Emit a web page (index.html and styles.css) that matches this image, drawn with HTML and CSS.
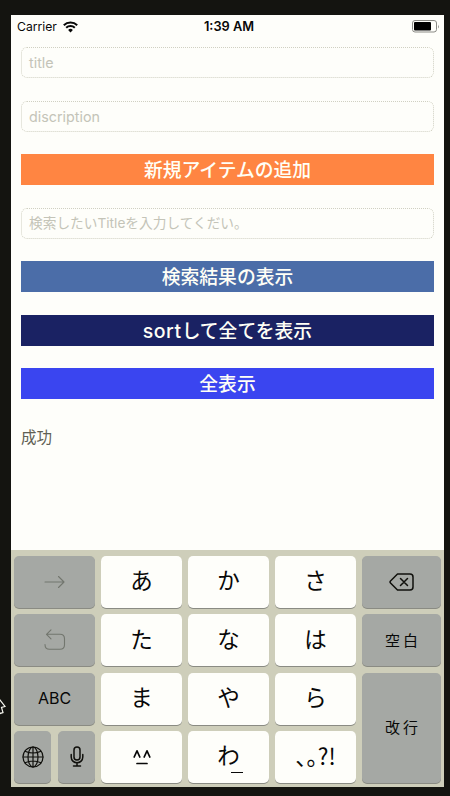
FILE: index.html
```html
<!DOCTYPE html>
<html lang="ja">
<head>
<meta charset="utf-8">
<title>アイテム</title>
<link rel="stylesheet" href="styles.css">
</head>
<body>
<main class="phone">
  <header class="status">
    <div class="carrier"><span>Carrier</span>
      <svg class="wifi" viewBox="0 0 15 12" width="15" height="12"><path d="M.8 4.200a9.600 9.600 0 0 1 13.400 0M3.200 6.800a6.100 6.100 0 0 1 8.600 0" fill="none" stroke="#080808" stroke-width="2"/><path d="M5.100 8.900a3.400 3.400 0 0 1 4.800 0L7.500 11.400z" fill="#080808"/></svg>
    </div>
    <div class="time">1:39 AM</div>
    <svg class="battery" viewBox="0 0 28 13" width="28" height="13"><rect x=".5" y=".5" width="24" height="11.500" rx="2.500" fill="none" stroke="#8b8b86"/><rect x="2" y="2" width="17" height="8.500" rx="1" fill="#000"/><path d="M26 4.500v4q1.500-2 0-4" fill="#8b8b86"/></svg>
  </header>
  <section class="form">
    <div class="field">title</div>
    <div class="field">discription</div>
    <div class="button orange">新規アイテムの追加</div>
    <div class="field search">検索したいTitleを入力してくだい。</div>
    <div class="button blue">検索結果の表示</div>
    <div class="button navy"><span><span class="latin">sort</span>して全てを表示</span></div>
    <div class="button bright">全表示</div>
    <p class="result">成功</p>
  </section>
  <section class="keyboard">
    <div class="key gray"><svg class="dim" viewBox="0 0 22 14" width="22" height="14"><path d="M1 7h19M14.500 1.500 20 7l-5.500 5.500"/></svg></div>
    <div class="key">あ</div><div class="key">か</div><div class="key">さ</div>
    <div class="key gray"><svg class="ink" viewBox="0 0 25 18" width="25" height="18"><path d="M8.500 1H21q3 0 3 3v10q0 3-3 3H8.500L1.500 10q-1-1 0-2zM11.500 5.500l7 7M18.500 5.500l-7 7"/></svg></div>
    <div class="key gray"><svg class="dim" viewBox="0 0 22 22" width="22" height="22"><path d="M7 .8 2.500 5.300 7 9.800M2.500 5.300H16q4.500 0 4.500 4.500v6q0 4.500-4.500 4.500H5.500Q1 20.300 1 15.500"/></svg></div>
    <div class="key">た</div><div class="key">な</div><div class="key">は</div>
    <div class="key gray word">空白</div>
    <div class="key gray abc">ABC</div>
    <div class="key">ま</div><div class="key">や</div><div class="key">ら</div>
    <div class="key gray word enter">改行</div>
    <div class="pair">
      <div class="key gray"><svg class="ink globe" viewBox="0 0 22 22" width="22" height="22"><circle cx="11" cy="11" r="10"/><ellipse cx="11" cy="11" rx="5" ry="10"/><path d="M11 1v20M1 11h20M3 5.200q8 3.600 16 0M3 16.800q8-3.600 16 0"/></svg></div>
      <div class="key gray"><svg class="ink" viewBox="0 0 14 21" width="14" height="21"><rect x="4" y="1" width="6" height="13" rx="3"/><path d="M1.200 8.500V11a5.800 5.800 0 0 0 11.600 0V8.500M7 17v3M3.500 20h7"/></svg></div>
    </div>
    <div class="key"><svg class="face" viewBox="0 0 18 16" width="18" height="16"><path d="M1.200 8 4 1.800 6.800 8M11.200 8 14 1.800 16.800 8M4 14.500h10"/></svg></div>
    <div class="key wa">わ<span class="bar"></span></div>
    <div class="key punct">、。?!</div>
  </section>
</main>
<svg class="cursor" viewBox="0 0 7 18" width="7" height="18"><path d="M-3-2 5 8.500 1.500 9.500 3 14.500 0 15.500-3 9" fill="#111110" stroke="#f5f5ee" stroke-width="1.200"/></svg>
</body>
</html>
```
FILE: styles.css
```css
* { box-sizing: border-box; }
body {
  margin: 0;
  height: 796px;
  padding: 15px 6px 9px 11px;
  background: #141410;
  overflow: hidden;
  font-family: Inter, "Noto Sans CJK JP", sans-serif;
  color: #080808;
}
.phone {
  height: 772px;
  background: #fefefa;
  display: flex;
  flex-direction: column;
}
.status {
  height: 23px;
  padding: 0 4px 0 6px;
  display: grid;
  grid-template-columns: 1fr auto 1fr;
  align-items: center;
  font-size: 12.2px;
}
.carrier { display: flex; align-items: center; gap: 6px; }
.time { font-weight: 600; font-size: 12.8px; padding-left: 1px; }
.battery { justify-self: end; margin-top: -1px; }
.form { flex: 1; padding: 9px 10px 0; }
.field, .button { height: 31px; margin-bottom: 22.5px; }
.field {
  border: 1px dotted #d0d0c2;
  border-radius: 6px;
  padding-left: 7px;
  line-height: 29px;
  font-size: 14.3px;
  color: #c4c4b8;
}
.search { font-size: 13.7px; }
.button {
  display: flex;
  align-items: center;
  justify-content: center;
  color: #fffff6;
  font-size: 18.8px;
  font-weight: 500;
  line-height: 31px;
  padding-top: 2px;
}
.latin { font-size: 19.5px; letter-spacing: .5px; }
.orange { background: #ff8542; }
.blue { background: #4b6da8; }
.navy { background: #1a2263; }
.bright { background: #3a45f0; }
.result { margin: 0; font-size: 15.5px; line-height: 31px; color: #606054; }
.keyboard {
  height: 237px;
  padding: 6px 3px 4px;
  background: #ceceba;
  display: grid;
  grid-template-columns: 81px 81px 81px 81px 79px;
  grid-template-rows: repeat(4, 52px);
  gap: 6.4px 6px;
}
.key {
  border-radius: 5px;
  background: #fefefa;
  box-shadow: 0 1px 0 #8a8b83;
  display: flex;
  align-items: center;
  justify-content: center;
  padding-bottom: 1px;
  font-size: 22.5px;
  line-height: 1;
}
.gray { background: #a5a8a4; }
.pair { display: grid; grid-template-columns: 37px 37px; gap: 7px; }
.enter { grid-column: 5; grid-row: 3 / span 2; }
.key.word { font-size: 15px; letter-spacing: 3px; padding: 0 0 0 3px; }
.abc { font-size: 16px; }
.key svg { fill: none; stroke-linecap: round; stroke-linejoin: round; }
.dim { stroke: #72766e; stroke-width: 1.1; }
.ink { stroke: #10100c; stroke-width: 1.5; }
.globe { stroke-width: 1.2; }
.face { stroke: #080808; stroke-width: 1.7; }
.wa { position: relative; }
.bar { position: absolute; left: 43px; top: 41px; width: 12px; height: 1px; background: #080808; }
.key.punct {
  font-family: "Noto Sans CJK JP", sans-serif;
  font-feature-settings: "halt";
  padding-bottom: 4px;
}
.cursor { position: absolute; left: 0; top: 698px; }
```
